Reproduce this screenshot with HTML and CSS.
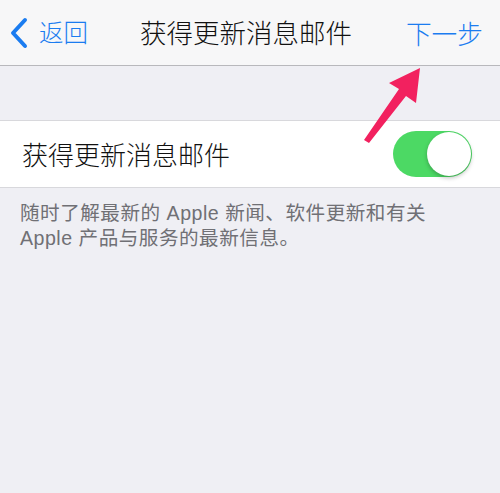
FILE: index.html
```html
<!DOCTYPE html>
<html lang="zh">
<head>
<meta charset="utf-8">
<link rel="stylesheet" href="styles.css">
</head>
<body>
<div class="nav">
  <div class="back">
    <svg class="chev" width="20" height="32" viewBox="0 0 20 32"><path d="M16 3 L4 16 L16 29" fill="none" stroke="#1b7cf0" stroke-width="4" stroke-linecap="round" stroke-linejoin="round"/></svg>
    <span>返回</span>
  </div>
  <div class="title">获得更新消息邮件</div>
  <div class="next">下一步</div>
</div>
<div class="gap"></div>
<div class="cell">
  <div class="label">获得更新消息邮件</div>
  <div class="toggle"><div class="knob"></div></div>
</div>
<div class="footer">
  <div class="line">随时了解最新的 Apple 新闻、软件更新和有关</div>
  <div class="line">Apple 产品与服务的最新信息。</div>
</div>
<svg class="arrow" width="70" height="90" viewBox="0 0 70 90">
  <path d="M60 6 L29 21 L39 27 L4 78 L9 81 L46 34 L56 41 Z" fill="#f2215f"/>
</svg>
</body>
</html>
```
FILE: styles.css
```css
html, body { margin: 0; padding: 0; }
body {
  width: 500px; height: 493px; overflow: hidden;
  background: #efeff4;
  font-family: "Noto Sans CJK SC", "Liberation Sans", sans-serif;
  font-weight: 300;
  position: relative;
}
.nav {
  height: 66px; box-sizing: border-box;
  background: #f7f7f8;
  border-bottom: 1px solid #b8b8bc;
  display: flex; align-items: center;
  position: relative;
}
.back {
  display: flex; align-items: center;
  padding-left: 9px; color: #1b7cf0; font-size: 24.5px;
}
.back span { margin-left: 10px; line-height: 1; }
.title {
  position: absolute; left: 0; right: 0; text-align: center;
  padding-right: 8px;
  font-size: 26.5px; color: #111; line-height: 1;
  pointer-events: none;
}
.next {
  margin-left: auto; padding-right: 17px;
  font-size: 25.7px; color: #1b7cf0; line-height: 1;
}
.gap { height: 54px; }
.cell {
  height: 68px; box-sizing: border-box;
  background: #fff;
  border-top: 1px solid #d8d8dc;
  border-bottom: 1px solid #d8d8dc;
  display: flex; align-items: center;
  padding: 0 28px 0 22px;
}
.label { font-size: 26px; color: #111; line-height: 1; }
.toggle {
  margin-left: auto;
  width: 79px; height: 46px; border-radius: 23px;
  background: #4cd964;
  display: flex; justify-content: flex-end; align-items: center;
  padding: 1px; box-sizing: border-box;
}
.knob {
  width: 44px; height: 44px; border-radius: 50%;
  background: #fff;
  box-shadow: 0 2px 4px rgba(0,0,0,0.25);
}
.footer {
  padding: 13px 20px 0 20px;
  font-family: "Liberation Sans", "Noto Sans CJK SC", sans-serif;
  font-weight: 400;
  font-size: 19.6px; color: #707075;
  letter-spacing: 0.5px;
}
.line { height: 25px; line-height: 25px; }
.arrow { position: absolute; left: 360px; top: 62px; }
```
